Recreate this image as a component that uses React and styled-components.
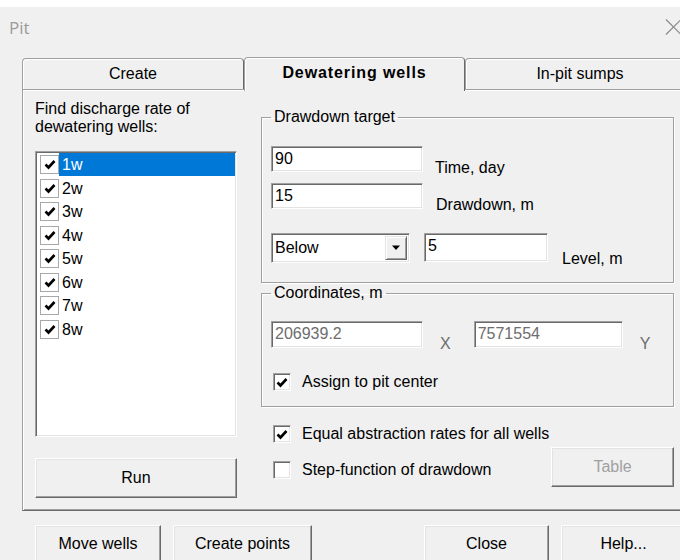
import React from 'react';
import styled, { createGlobalStyle } from 'styled-components';

const GlobalStyle = createGlobalStyle`
  html, body {
    margin: 0;
    padding: 0;
    background: #f0f0f0;
    overflow: hidden;
  }
  body {
    font-family: "Liberation Sans", Arial, sans-serif;
    font-size: 16px;
    color: #000;
  }
`

const Window = styled.div`
  width: 700px;
  height: 560px;
  box-sizing: border-box;
  border-top: 7px solid #ffffff;
  background: #f0f0f0;
`

const TitleBar = styled.div`
  height: 40px;
  display: flex;
  align-items: center;
  justify-content: space-between;
  padding-left: 9px;
  padding-right: 17px;
`

const Title = styled.span`
  font-family: "Open Sans", "Noto Sans", sans-serif;
  font-size: 17px;
  color: #9b9b9b;
`

const TabRow = styled.div`
  display: flex;
  align-items: flex-end;
  height: 32px;
  margin-top: 10px;
  margin-left: 22px;
`

const Tab = styled.div`
  position: relative;
  z-index: ${p => (p.$active ? 1 : 0)};
  box-sizing: border-box;
  width: ${p => p.$width}px;
  height: ${p => (p.$active ? 34 : 31)}px;
  margin-bottom: ${p => (p.$active ? -2 : 0)}px;
  display: flex;
  align-items: center;
  justify-content: center;
  padding-bottom: ${p => (p.$active ? 3 : 0)}px;
  background: #f0f0f0;
  border: 1px solid #a0a0a0;
  border-right-color: #696969;
  border-bottom: none;
  border-radius: 4px 4px 0 0;
  box-shadow: inset 1px 1px 0 #ffffff;
  font-weight: ${p => (p.$active ? 'bold' : 'normal')};
  letter-spacing: ${p => (p.$active ? '0.9px' : '0')};
`

const Panel = styled.div`
  box-sizing: border-box;
  width: 680px;
  height: 422px;
  margin-left: 22px;
  display: flex;
  padding: 10px 0 0 12px;
  border-top: 1px solid #a0a0a0;
  border-left: 1px solid #a0a0a0;
  border-bottom: 1px solid #696969;
  box-shadow: inset 1px 1px 0 #ffffff, inset 0 -1px 0 #a0a0a0;
`

const LeftColumn = styled.div`
  width: 202px;
  display: flex;
  flex-direction: column;
`

const Caption = styled.div`
  line-height: 18px;
`

const ListBox = styled.div`
  box-sizing: border-box;
  height: 286px;
  margin-top: 15px;
  padding: 1px 0 0 4px;
  background: #ffffff;
  border: 1px solid #a0a0a0;
  border-right-color: #ffffff;
  border-bottom-color: #ffffff;
  box-shadow: inset 1px 1px 0 #696969, inset -1px -1px 0 #e3e3e3;
`

const ListItem = styled.div`
  display: flex;
  align-items: center;
  height: 23.5px;
`

const ItemText = styled.span`
  flex: 1;
  height: 23px;
  line-height: 23px;
  padding-left: 3px;
  margin-right: 1px;
  background: ${p => (p.$selected ? '#0078d7' : 'transparent')};
  color: ${p => (p.$selected ? '#ffffff' : '#000000')};
`

const Button = styled.button`
  box-sizing: border-box;
  width: ${p => p.$width}px;
  height: ${p => p.$height || 40}px;
  margin: 0;
  padding: 0;
  font-family: "Liberation Sans", Arial, sans-serif;
  font-size: 16px;
  color: ${p => (p.disabled ? '#a0a0a0' : '#000000')};
  background: #f0f0f0;
  border: 1px solid #ffffff;
  border-right-color: #696969;
  border-bottom-color: #696969;
  box-shadow: inset -1px -1px 0 #a0a0a0, inset 1px 1px 0 #e3e3e3;
`

const RunButton = styled(Button)`
  margin-top: 21px;
`

const RightColumn = styled.div`
  width: 413px;
  margin-left: 24px;
  display: flex;
  flex-direction: column;
`

const Group = styled.fieldset`
  box-sizing: border-box;
  height: ${p => p.$height}px;
  margin: ${p => p.$top}px 0 0 0;
  padding: 0 9px;
  border: 1px solid #a0a0a0;
  box-shadow: inset 1px 1px 0 #ffffff, 1px 1px 0 #ffffff;
  min-width: 0;
`

const Legend = styled.legend`
  padding: 0 3px;
  line-height: 18px;
`

const GroupBody = styled.div`
  display: flex;
  flex-direction: column;
  padding-top: ${p => p.$top}px;
`

const FieldRow = styled.div`
  display: flex;
  align-items: flex-end;
  margin-top: ${p => p.$top || 0}px;
`

const Field = styled.div`
  box-sizing: border-box;
  width: ${p => p.$width}px;
  height: ${p => p.$height || 26}px;
  margin-left: ${p => p.$left || 0}px;
  align-self: flex-start;
  padding: 3px 0 0 3px;
  line-height: 18px;
  background: #ffffff;
  color: ${p => (p.$disabled ? '#6d6d6d' : '#000000')};
  border: 1px solid #a0a0a0;
  border-right-color: #ffffff;
  border-bottom-color: #ffffff;
  box-shadow: inset 1px 1px 0 #696969, inset -1px -1px 0 #e3e3e3;
`

const FieldLabel = styled.span`
  line-height: 18px;
  margin-left: ${p => p.$gap}px;
  margin-bottom: -5px;
  color: ${p => (p.$disabled ? '#6d6d6d' : '#000000')};
`

const Combo = styled(Field)`
  display: flex;
  padding: 2px 2px 2px 3px;
  line-height: 22px;
`

const ComboText = styled.span`
  flex: 1;
  padding-top: 1px;
`

const DropButton = styled.span`
  box-sizing: border-box;
  width: 22px;
  height: 24px;
  display: flex;
  align-items: center;
  justify-content: center;
  background: #f0f0f0;
  border: 1px solid #e3e3e3;
  border-right-color: #696969;
  border-bottom-color: #696969;
  box-shadow: inset 1px 1px 0 #ffffff, inset -1px -1px 0 #a0a0a0;
`

const CheckRow = styled.label`
  display: flex;
  align-items: center;
  height: 20px;
  margin-top: ${p => p.$top}px;
  margin-left: ${p => p.$left || 0}px;
`

const CheckText = styled.span`
  margin-left: 11px;
  line-height: 18px;
`

const Box = styled.span`
  box-sizing: border-box;
  width: ${p => p.$size}px;
  height: ${p => p.$size}px;
  display: flex;
  align-items: center;
  justify-content: center;
  background: #ffffff;
  border: 1px solid ${p => (p.$flat ? '#a8a8a8' : '#a0a0a0')};
  ${p => !p.$flat && `
    border-right-color: #ffffff;
    border-bottom-color: #ffffff;
    box-shadow: inset 1px 1px 0 #696969, inset -1px -1px 0 #e3e3e3;
  `}
`

const Bottom = styled.div`
  display: flex;
  justify-content: space-between;
`

const CheckColumn = styled.div`
  display: flex;
  flex-direction: column;
`

const TableButton = styled(Button)`
  margin-top: 40px;
`

const Footer = styled.div`
  display: flex;
  margin-top: 14px;
  padding-left: 35px;
  gap: 12px;
`

const Spacer = styled.div`
  width: 88px;
`

const CheckMark = () => (
  <svg width="12" height="11" viewBox="0 0 12 11">
    <path d="M1.5 5.5 L4.5 8.5 L10.5 2" fill="none" stroke="#000" strokeWidth="2.6" />
  </svg>
)

const CheckBox = ({ checked, flat, size = 18 }) => (
  <Box $flat={flat} $size={size}>{checked && <CheckMark />}</Box>
)

const wells = ['1w', '2w', '3w', '4w', '5w', '6w', '7w', '8w']

const App = () => (
  <Window>
    <GlobalStyle />
    <TitleBar>
      <Title>Pit</Title>
      <svg width="18" height="16" viewBox="0 0 18 16">
        <path d="M1 0.5 L16 15.5 M16 0.5 L1 15.5" stroke="#8a8a8a" strokeWidth="1.2" />
      </svg>
    </TitleBar>

    <TabRow>
      <Tab $width={222}>Create</Tab>
      <Tab $width={221} $active>Dewatering wells</Tab>
      <Tab $width={230}>In-pit sumps</Tab>
    </TabRow>

    <Panel>
      <LeftColumn>
        <Caption>Find discharge rate of<br />dewatering wells:</Caption>
        <ListBox>
          {wells.map((w, i) => (
            <ListItem key={w}>
              <CheckBox checked flat size={19} />
              <ItemText $selected={i === 0}>{w}</ItemText>
            </ListItem>
          ))}
        </ListBox>
        <RunButton $width={202}>Run</RunButton>
      </LeftColumn>

      <RightColumn>
        <Group $height={175} $top={8}>
          <Legend>Drawdown target</Legend>
          <GroupBody $top={20}>
            <FieldRow>
              <Field $width={152}>90</Field>
              <FieldLabel $gap={12}>Time, day</FieldLabel>
            </FieldRow>
            <FieldRow $top={11}>
              <Field $width={152}>15</Field>
              <FieldLabel $gap={13}>Drawdown, m</FieldLabel>
            </FieldRow>
            <FieldRow $top={24}>
              <Combo $width={139} $height={30}>
                <ComboText>Below</ComboText>
                <DropButton>
                  <svg width="10" height="6" viewBox="0 0 10 6">
                    <path d="M1 0.5 L9 0.5 L5 5 Z" fill="#000" />
                  </svg>
                </DropButton>
              </Combo>
              <Field $width={124} $height={29} $left={14}>5</Field>
              <FieldLabel $gap={14}>Level, m</FieldLabel>
            </FieldRow>
          </GroupBody>
        </Group>

        <Group $height={123} $top={1}>
          <Legend>Coordinates, m</Legend>
          <GroupBody $top={19}>
            <FieldRow>
              <Field $width={152} $height={27} $disabled>206939.2</Field>
              <FieldLabel $gap={17} $disabled>X</FieldLabel>
              <Field $width={149} $height={27} $left={23} $disabled>7571554</Field>
              <FieldLabel $gap={17} $disabled>Y</FieldLabel>
            </FieldRow>
            <CheckRow $top={24} $left={2}>
              <CheckBox checked />
              <CheckText>Assign to pit center</CheckText>
            </CheckRow>
          </GroupBody>
        </Group>

        <Bottom>
          <CheckColumn>
            <CheckRow $top={17} $left={12}>
              <CheckBox checked />
              <CheckText>Equal abstraction rates for all wells</CheckText>
            </CheckRow>
            <CheckRow $top={16} $left={12}>
              <CheckBox />
              <CheckText>Step-function of drawdown</CheckText>
            </CheckRow>
          </CheckColumn>
          <TableButton $width={123} disabled>Table</TableButton>
        </Bottom>
      </RightColumn>
    </Panel>

    <Footer>
      <Button $width={126} $height={38}>Move wells</Button>
      <Button $width={139} $height={38}>Create points</Button>
      <Spacer />
      <Button $width={125} $height={38}>Close</Button>
      <Button $width={125} $height={38}>Help...</Button>
    </Footer>
  </Window>
)

export default App
